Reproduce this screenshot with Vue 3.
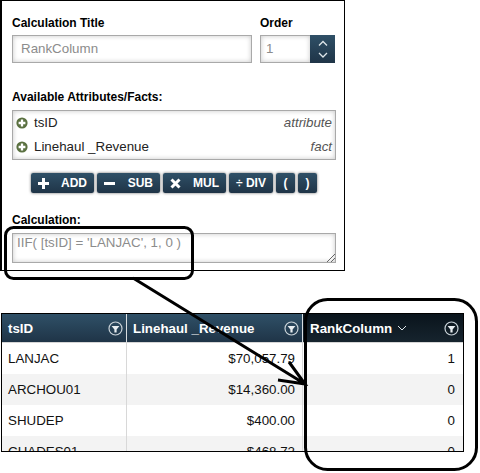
<template>
  <div class="page">
    <div class="calc-panel">
      <div class="top-row">
        <div class="field title-field">
          <label class="lbl">Calculation Title</label>
          <div class="inp">RankColumn</div>
        </div>
        <div class="field order-field">
          <label class="lbl">Order</label>
          <div class="order-box">
            <div class="inp order-inp">1</div>
            <div class="spin">
              <svg width="22" height="28" viewBox="0 0 22 28">
                <path d="M7 10.5 L11 6.5 L15 10.5" fill="none" stroke="#dfe6ea" stroke-width="1.3" />
                <path d="M7 18 L11 22 L15 18" fill="none" stroke="#dfe6ea" stroke-width="1.3" />
              </svg>
            </div>
          </div>
        </div>
      </div>

      <label class="lbl avail-lbl">Available Attributes/Facts:</label>
      <div class="attr-list">
        <div v-for="a in attrs" :key="a.name" class="attr-row">
          <svg class="plus" width="12" height="12" viewBox="0 0 12 12">
            <circle cx="6" cy="6" r="5.6" fill="#5a7040" />
            <path d="M6 2.6 V9.4 M2.6 6 H9.4" stroke="#fff" stroke-width="2.3" />
          </svg>
          <span class="attr-name">{{ a.name }}</span>
          <span class="attr-type">{{ a.type }}</span>
        </div>
      </div>

      <div class="ops">
        <button v-for="b in buttons" :key="b.label" class="op" :class="b.cls">
          <svg v-if="b.icon" class="op-icon" width="11" height="11" viewBox="0 0 11 11">
            <path :d="b.icon" stroke="#fff" stroke-width="3" fill="none" />
          </svg>
          <span>{{ b.label }}</span>
        </button>
      </div>

      <label class="lbl calc-lbl">Calculation:</label>
      <div class="calc-area">
        IIF( [tsID] = 'LANJAC', 1, 0 )
        <svg class="grip" width="9" height="9" viewBox="0 0 9 9">
          <path d="M1 9 L9 1 M5 9 L9 5" stroke="#666" stroke-width="1" />
        </svg>
      </div>
    </div>

    <div class="grid-wrap">
      <table class="grid">
        <colgroup>
          <col style="width:125px" />
          <col style="width:176px" />
          <col />
        </colgroup>
        <thead>
          <tr>
            <th v-for="c in columns" :key="c.name" :class="{ active: c.active }">
              <div class="th-inner">
                <span>{{ c.name }}</span>
                <svg v-if="c.active" class="sort" width="10" height="6" viewBox="0 0 10 6">
                  <path d="M1 1 L5 5 L9 1" fill="none" stroke="#dfe6ea" stroke-width="1" />
                </svg>
                <svg class="filter" width="15" height="15" viewBox="0 0 15 15">
                  <circle cx="7.5" cy="7.5" r="6.5" fill="none" stroke="#c9d2d8" stroke-width="1.2" />
                  <path d="M3.6 5 H11.4 L8.6 8.4 V11.4 H6.4 V8.4 Z" fill="#e8edf0" />
                </svg>
              </div>
            </th>
          </tr>
        </thead>
        <tbody>
          <tr v-for="r in rows" :key="r.id">
            <td>{{ r.id }}</td>
            <td class="num">{{ r.rev }}</td>
            <td class="num">{{ r.rank }}</td>
          </tr>
        </tbody>
      </table>
    </div>

    <!-- hand drawn callouts on top of the screenshot -->
    <svg class="callouts" width="480" height="473" viewBox="0 0 480 473">
      <rect x="5.5" y="227.5" width="187" height="51" rx="8" fill="none" stroke="#000" stroke-width="3" />
      <rect x="305.5" y="299.5" width="171" height="170" rx="22" fill="none" stroke="#000" stroke-width="3" />
      <path d="M133 278 L305 384 M289 362 L305 384 L278 380" fill="none" stroke="#000" stroke-width="3" />
    </svg>
  </div>
</template>

<script setup>
const attrs = [
  { name: 'tsID', type: 'attribute' },
  { name: 'Linehaul _Revenue', type: 'fact' }
]

const buttons = [
  { label: 'ADD', cls: 'w-op', icon: 'M5.5 0 V11 M0 5.5 H11' },
  { label: 'SUB', cls: 'w-op', icon: 'M0 5.5 H11' },
  { label: 'MUL', cls: 'w-op', icon: 'M1.5 1.5 L9.5 9.5 M9.5 1.5 L1.5 9.5' },
  { label: '÷ DIV', cls: 'w-div' },
  { label: '(', cls: 'w-par' },
  { label: ')', cls: 'w-par' }
]

const columns = [
  { name: 'tsID' },
  { name: 'Linehaul _Revenue' },
  { name: 'RankColumn', active: true }
]

const rows = [
  { id: 'LANJAC', rev: '$70,057.79', rank: 1 },
  { id: 'ARCHOU01', rev: '$14,360.00', rank: 0 },
  { id: 'SHUDEP', rev: '$400.00', rank: 0 },
  { id: 'CHADES01', rev: '$468.72', rank: 0 }
]
</script>

<style>
html, body { background: #fff; }
</style>

<style scoped>
.page {
  position: relative;
  width: 480px;
  height: 473px;
  overflow: hidden;
  font-family: "Liberation Sans", Arial, sans-serif;
  color: #000;
}
.calc-panel {
  box-sizing: border-box;
  width: 345px;
  height: 271px;
  border: 1px solid #000;
  border-left-width: 2px;
  padding: 15px 8px 0 10px;
}
.top-row { display: flex; gap: 8px; }
.title-field { width: 240px; }
.order-field { width: 75px; }
.lbl {
  display: block;
  font-size: 12px;
  font-weight: bold;
  line-height: 14px;
}
.inp {
  box-sizing: border-box;
  height: 28px;
  margin-top: 5px;
  padding: 0 8px;
  line-height: 26px;
  font-size: 13.33px;
  color: #8c8c8c;
  border: 1px solid #a9a9a9;
  box-shadow: inset 0 0 5px rgba(0, 0, 0, 0.22);
  background: #fff;
}
.order-box { display: flex; margin-top: 5px; }
.order-inp { flex: 1; margin-top: 0; padding: 0 5px; border-right: 0; }
.spin {
  width: 25px;
  height: 28px;
  display: flex;
  justify-content: center;
  background: linear-gradient(#2f5067, #1f3447);
}
.avail-lbl { margin-top: 27px; }
.attr-list {
  box-sizing: border-box;
  height: 50px;
  margin-top: 6px;
  padding: 0 3px;
  display: flex;
  flex-direction: column;
  gap: 1px;
  border: 1px solid #a9a9a9;
  box-shadow: inset 0 0 5px rgba(0, 0, 0, 0.22);
}
.attr-row {
  display: flex;
  align-items: center;
  height: 23px;
  font-size: 13.33px;
}
.plus { margin-right: 6px; }
.attr-name { color: #222; flex: 1; }
.attr-type { font-style: italic; color: #555; }
.ops {
  display: flex;
  justify-content: flex-start;
  gap: 3px;
  margin: 13px 0 0 19px;
}
.op {
  display: flex;
  align-items: center;
  justify-content: space-between;
  box-sizing: border-box;
  height: 20px;
  border: 0;
  border-radius: 2px;
  padding: 0 7px;
  font-family: inherit;
  font-size: 12px;
  font-weight: bold;
  color: #fff;
  background: linear-gradient(#2f5067, #1f3447);
  box-shadow: 0 0 3px rgba(0, 0, 0, 0.6);
}
.w-op { width: 63px; }
.w-div { width: 44px; justify-content: center; }
.w-par { width: 19px; justify-content: center; }
.calc-lbl { margin-top: 20px; }
.calc-area {
  position: relative;
  box-sizing: border-box;
  height: 30px;
  margin-top: 6px;
  padding: 1px 4px;
  font-size: 13.33px;
  line-height: 16px;
  color: #8c8c8c;
  border: 1px solid #a9a9a9;
  box-shadow: inset 0 0 5px rgba(0, 0, 0, 0.22);
}
.grip { position: absolute; right: 0; bottom: 0; }
.grid-wrap {
  box-sizing: border-box;
  width: 463px;
  height: 139px;
  margin: 42px 0 0 1px;
  border: 1px solid #000;
  overflow: hidden;
}
.grid {
  width: 100%;
  table-layout: fixed;
  border-collapse: separate;
  border-spacing: 0;
  font-size: 13.33px;
}
th {
  box-sizing: border-box;
  height: 29px;
  padding: 0;
  border-right: 1px solid #d8dde0;
  border-bottom: 1px solid #d6d6d6;
  background: linear-gradient(#2f5067, #1f3447);
  color: #fff;
  text-align: left;
  font-size: 13.33px;
  font-weight: bold;
}
th:last-child { border-right: 0; }
th.active { background: linear-gradient(#0a141c, #16242e); }
.th-inner {
  display: flex;
  align-items: center;
  padding: 0 3px 0 6px;
}
th.active .th-inner { padding-left: 7px; padding-right: 4px; }
.th-inner span { margin-right: 5px; }
.filter { margin-left: auto; }
td {
  box-sizing: border-box;
  height: 31px;
  padding: 0 7px 0 6px;
  border-right: 1px solid #d8d8d8;
  color: #111;
}
td:last-child { border-right: 0; padding-right: 8px; }
td.num { text-align: right; }
tbody tr:nth-child(even) td { background: #f3f3f3; }
.callouts { position: absolute; left: 0; top: 0; pointer-events: none; }
</style>
